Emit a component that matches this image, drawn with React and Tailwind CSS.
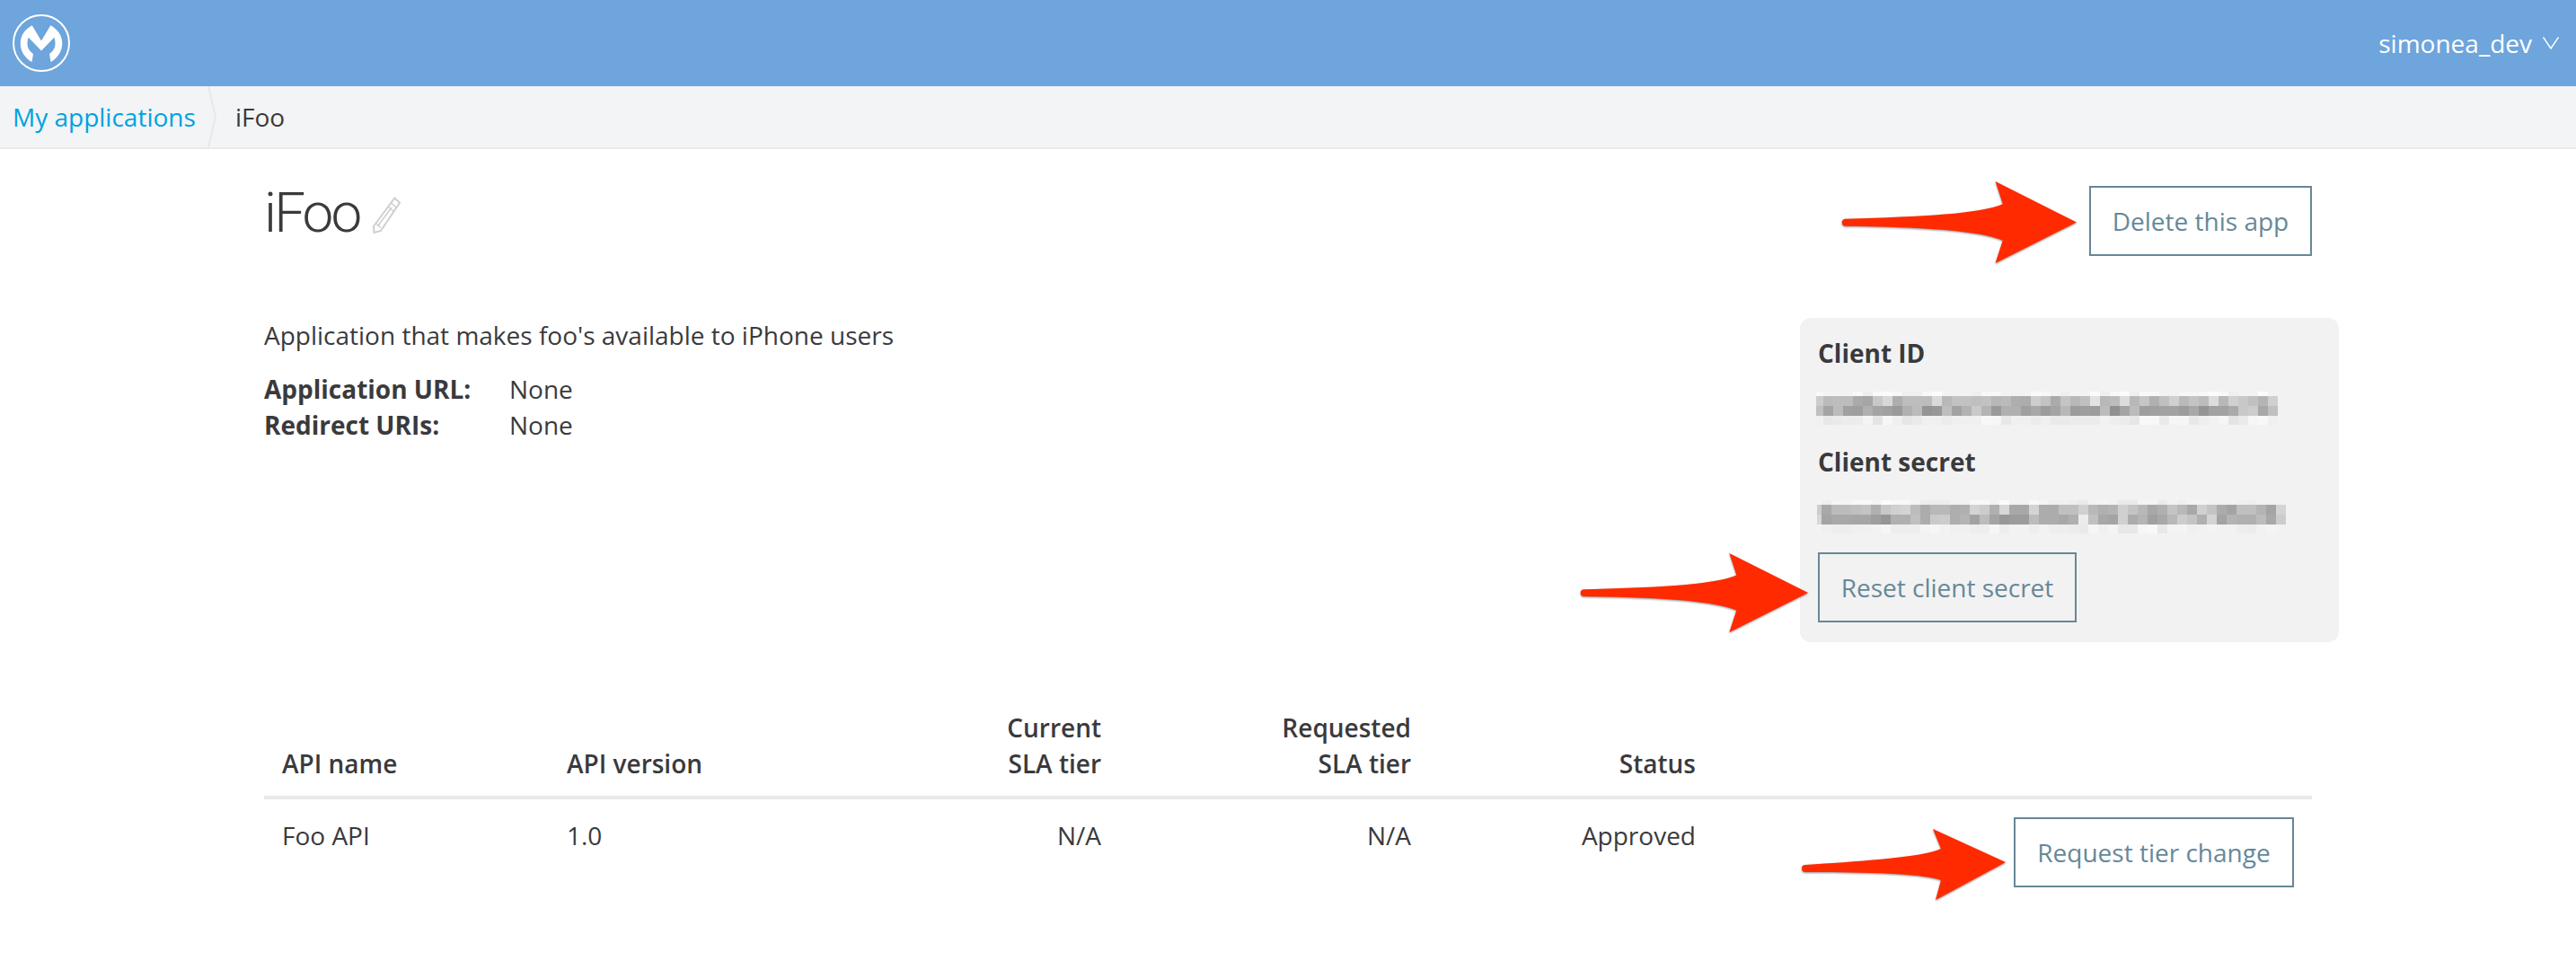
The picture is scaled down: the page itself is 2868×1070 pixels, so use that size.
const clientIdRows = [
  "f8f4f3f3f8eef9faf7efeff8fcf3f2f2eef8f8f2f2f2f9f8f3eff3f4fbeef8fbeff8f8f2f2f6f6f8fbf8eef2f2fbf3",
  "ccbbbdbcaaa6c8d8aebdbdbddab8c2c2bfc2b8bbaeaccdc4abc4b8c0e2b8bcdcb8c6b0c0d0bac4bcdcb8d0c8c0b4d0",
  "c0a4bca09eb0a4a09ab0bc9498bea2b2cab49ab0b0a0a89ca4b89c9e9cbc90a4bc9ea0a2a29ca894a2a2aac8cca8c0",
  "f0e8eaececf4e4f6f0e6eaf0f0ecf0f0f0f8f6e8f0f0ecf0eaeaecececf2eeece6f8f8eaf6f6e8eef2f6e4eaf6f8f0",
];

const clientSecretRows = [
  "f3eef6f4f8f8f4fcf8f8f3ececec f2f2f8f8f2fbf2f2f9f4f0f0eeeaf2f4f2eaeaf4f4eaf2eef2f4f2f2f2f0eef2f2f2",
  "cca8bcbcc0c4b0c8d0d4bcacb8b8aeb0d4ccb0d8a8a8d4acacc0c0d0b8b0b4d0c4b8a8b0c4b8a8d0c4aca4c0c0b4a4d4",
  "d8a4a8a8a6a69e96b0b0c0accaccaeb4a2bca4989c9cbcacaca8b0ecc0a8a4d0acb4a0a8b8ccc4b0d4a4b4b0b0bca8cc",
  "f4f0eeeef0f0f2f6eeeeeef4f6f2f0f0eeeef6eef2f2eef2eeeeeceaf6f0f4e8e8f6f8e8f4f4f0f2f4f2f2eeecf2f4f2",
];

const ROW_HEIGHTS = [5, 11, 11, 10];

// pixelated (redacted) credential, one rect per mosaic cell
const Redacted = ({ rows, width, crop }) => (
  <svg width={width} height={37} viewBox={`${crop} 0 ${width} 37`} shapeRendering="crispEdges" className="block">
    {rows.map((row, r) => {
      const clean = row.replace(/ /g, "");
      const y = ROW_HEIGHTS.slice(0, r).reduce((a, b) => a + b, 0);
      const cells = clean.match(/.{2}/g);
      return cells.map((v, c) => (
        <rect key={`${r}-${c}`} x={c * 11} y={y} width={11} height={ROW_HEIGHTS[r]} fill={`#${v}${v}${v}`} />
      ));
    })}
  </svg>
);

const ARROW =
  "M4 40.3C90 38 150 35 175 24.5L167 0L255 44L167 88L175 63.5C150 53 90 49 4 48A3.9 3.9 0 0 1 4 40.3Z";
const ARROW_TILTED =
  "M4 40C80 35 135 31 155 22L146 0L227 37L149 79L155 57C135 50 80 48 4 48A4 4 0 0 1 4 40Z";

const Arrow = ({ d, viewBox, className }) => (
  <svg
    viewBox={viewBox}
    preserveAspectRatio="none"
    className={`absolute right-full drop-shadow-[0_1px_1px_rgba(0,0,0,0.45)] ${className}`}
  >
    <path d={d} fill="#ff2a00" />
  </svg>
);

const OutlineButton = ({ children, className = "" }) => (
  <button className={`h-[78px] border-2 border-[#668797] text-[28px] text-[#668899] ${className}`}>{children}</button>
);

const Logo = () => (
  <svg viewBox="14 12 64 64" className="h-16 w-16">
    <circle cx="46" cy="44" r="31" fill="none" stroke="#fff" strokeWidth="2" />
    <path
      d="M35.7 24.3L46 41.5L56.3 24.3C64 28.5 69.3 35.5 69.3 44C69.3 52.5 64.8 60.5 56.5 65L55 56C59.5 53 61.5 49 61.5 44.5C61.5 42 61.2 39.8 60.3 37.8L46 52.5L31.7 37.8C30.8 39.8 30.5 42 30.5 44.5C30.5 49 32.5 53 37 56L35.5 65C27.2 60.5 22.7 52.5 22.7 44C22.7 35.5 28 28.5 35.7 24.3Z"
      fill="#fff"
    />
  </svg>
);

const Pencil = () => (
  <svg viewBox="0 0 31 41" fill="none" stroke="#cfcfcf" strokeWidth="2" className="ml-[14px] mt-[5px] h-[41px] w-[31px]">
    <path d="M24.3 1.5L30 6.7L9 38L1.5 40L1 33Z" />
    <path d="M20.5 7L27 12.5M17.5 11.5L24 17M4 30L9 34.5M21 12L5.5 33" strokeWidth="1.5" />
  </svg>
);

const App = () => {
  return (
    <div className="min-h-[1070px] bg-white font-['Open_Sans',sans-serif] text-[28px] leading-[40px] text-[#3a3a3c]">
      {/* Top bar */}
      <div className="flex h-24 items-center justify-between bg-[#6da5dc] pl-[14px] pr-[19px] text-white">
        <Logo />
        <div className="flex items-center">
          <span>simonea_dev</span>
          <svg viewBox="0 0 18 14" fill="none" stroke="#fff" strokeWidth="1.5" className="ml-3 h-3.5 w-[18px]">
            <path d="M0.5 0.5L9 13L17.5 0.5" />
          </svg>
        </div>
      </div>

      {/* Breadcrumb */}
      <div className="flex h-[70px] items-center border-b-2 border-[#e8e9eb] bg-[#f3f4f6] pl-[14px]">
        <a className="w-[217px] text-[#00a2df]">My applications</a>
        <svg viewBox="0 0 10 68" fill="none" stroke="#e6e8ea" strokeWidth="2" className="h-[68px] w-2.5">
          <path d="M1 0L9 34L1 68" />
        </svg>
        <span className="ml-[21px]">iFoo</span>
      </div>

      <div className="mx-auto w-[2280px]">
        {/* Title row */}
        <div className="flex items-start justify-between pt-[41px]">
          <div className="-mt-[8px] flex items-center">
            <h1 className="font-['Roboto',sans-serif] text-[62px] font-light leading-[76px] tracking-[-0.045em]">iFoo</h1>
            <Pencil />
          </div>
          <div className="relative">
            <Arrow d={ARROW} viewBox="0 0 256 88" className="top-[-5px] mr-[13px] h-[91px] w-[263px]" />
            <OutlineButton className="w-[248px]">Delete this app</OutlineButton>
          </div>
        </div>

        {/* Description and credentials */}
        <div className="mt-[69px] flex items-start justify-between">
          <div>
            <p className="-mt-[1px]">Application that makes foo's available to iPhone users</p>
            <dl className="mt-[20px] grid grid-cols-[273px_1fr]">
              <dt className="font-bold">Application URL:</dt>
              <dd>None</dd>
              <dt className="font-bold">Redirect URIs:</dt>
              <dd>None</dd>
            </dl>
          </div>
          <div className="-mr-[30px] w-[600px] rounded-xl bg-[#f2f2f2] px-5 pb-[22px] pt-[19px]">
            <div className="font-bold">Client ID</div>
            <div className="-ml-[2px] mt-[23px]">
              <Redacted rows={clientIdRows} width={514} crop={3} />
            </div>
            <div className="mt-[21px] font-bold">Client secret</div>
            <div className="-ml-[1px] mt-[23px]">
              <Redacted rows={clientSecretRows} width={525} crop={6} />
            </div>
            <div className="relative mt-[21px] w-fit">
              <Arrow d={ARROW} viewBox="0 0 256 88" className="top-[1px] mr-[10px] h-[88px] w-[255px]" />
              <OutlineButton className="block w-[288px]">Reset client secret</OutlineButton>
            </div>
          </div>
        </div>

        {/* APIs table */}
        <table className="mt-[75px] w-full table-fixed border-collapse">
          <colgroup>
            <col className="w-[317px]" />
            <col className="w-[389px]" />
            <col className="w-[246px]" />
            <col className="w-[345px]" />
            <col className="w-[317px]" />
            <col />
          </colgroup>
          <thead>
            <tr className="border-b-4 border-[#e9e9e9] align-bottom">
              <th className="px-5 pb-4 text-left font-semibold">API name</th>
              <th className="px-5 pb-4 text-left font-semibold">API version</th>
              <th className="px-5 pb-4 text-right font-semibold">
                Current
                <br />
                SLA tier
              </th>
              <th className="px-5 pb-4 text-right font-semibold">
                Requested
                <br />
                SLA tier
              </th>
              <th className="px-5 pb-4 text-right font-semibold">Status</th>
              <th />
            </tr>
          </thead>
          <tbody>
            <tr className="align-top">
              <td className="px-5 pt-5">Foo API</td>
              <td className="px-5 pt-5">1.0</td>
              <td className="px-5 pt-5 text-right">N/A</td>
              <td className="px-5 pt-5 text-right">N/A</td>
              <td className="px-5 pt-5 text-right">Approved</td>
              <td className="px-5 py-5">
                <div className="relative ml-auto w-fit">
                  <Arrow d={ARROW_TILTED} viewBox="0 0 227 79" className="top-[13px] mr-[9px] h-[79px] w-[227px]" />
                  <OutlineButton className="block w-[312px]">Request tier change</OutlineButton>
                </div>
              </td>
            </tr>
          </tbody>
        </table>
      </div>
    </div>
  );
};

export default App;
